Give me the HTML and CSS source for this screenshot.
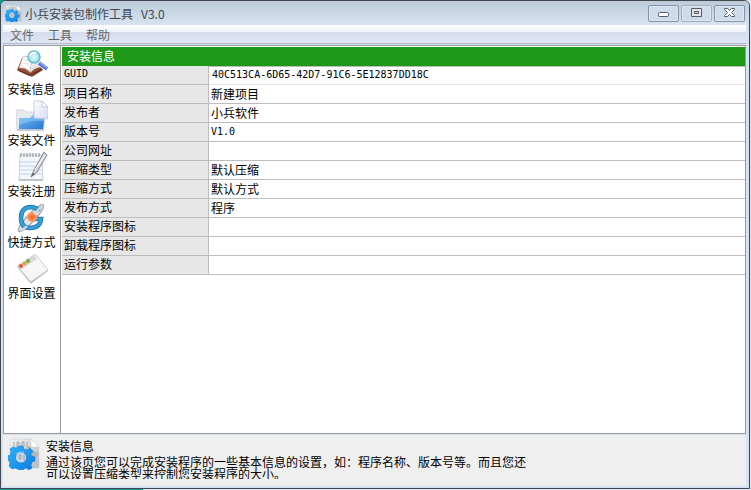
FILE: index.html
```html
<!DOCTYPE html>
<html lang="zh-CN">
<head>
<meta charset="UTF-8">
<meta name="viewport" content="width=device-width, initial-scale=1">
<title>小兵安装包制作工具 V3.0</title>
<link rel="stylesheet" href="styles.css">
</head>
<body>
<svg width="0" height="0" class="defs" aria-hidden="true">
  <defs>
    <linearGradient id="gearBlue" x1="0" y1="0" x2="1" y2="1">
      <stop offset="0" stop-color="#2fb4fa"/><stop offset="1" stop-color="#0a7be2"/>
    </linearGradient>
    <linearGradient id="pageGray" x1="0" y1="0" x2="1" y2="1">
      <stop offset="0" stop-color="#f2f2f2"/><stop offset="1" stop-color="#b9bcbf"/>
    </linearGradient>
    <linearGradient id="folderBlue" x1="0" y1="0" x2="1" y2="1">
      <stop offset="0" stop-color="#75bdf5"/><stop offset="1" stop-color="#2476d2"/>
    </linearGradient>
    <linearGradient id="paper" x1="0" y1="0" x2="1" y2="1">
      <stop offset="0" stop-color="#fff"/><stop offset="1" stop-color="#d5dbf4"/>
    </linearGradient>
    <radialGradient id="lens">
      <stop offset="0" stop-color="#e8fcff"/><stop offset="1" stop-color="#8fdce8"/>
    </radialGradient>
    <radialGradient id="orange">
      <stop offset="0" stop-color="#ff5a14"/><stop offset="1" stop-color="#f9a46c"/>
    </radialGradient>
    <symbol id="appIcon" viewBox="0 0 32 32">
      <path d="M2 1h21l8 8v21H2z" fill="url(#pageGray)" stroke="#c6c8ca" stroke-width=".5"/>
      <path d="M23 1v8h8z" fill="#fff" stroke="#c9cccf" stroke-width=".6"/>
      <path d="M6 4v5M9 4h2v5H9zM14 4h2v5h-2zM19 4v5M19 9h3v5h-3zM25 14h2v5h-2zM29 14v5" fill="none" stroke="#a0a3a6"/>
      <g fill="url(#gearBlue)" stroke="#0d78cc" stroke-width=".5">
        <path d="M11 8h4l1 3 3 1 3-2 3 3-2 3 1 2 3 1v4l-3 1-1 3 1 3-3 2-3-2-2 1-1 2h-4l-1-2-3-1-3 1-3-3 1-3-1-2-2-2v-3l3-1 1-3-1-3 3-2 3 1 2-1z"/>
      </g>
      <circle cx="13" cy="19.500" r="5.500" fill="#c9d8e4" stroke="#1778bf" stroke-width=".7"/>
      <path d="M8 16q3-3 8-2" fill="none" stroke="#8bd8ff"/>
      <path d="M11 17h2v4h-2zM16 17v5" fill="none" stroke="#8d99a3" stroke-width=".8"/>
    </symbol>
  </defs>
</svg>

<div class="window">
  <header class="titlebar">
    <svg class="title-icon"><use href="#appIcon"/></svg>
    <h1>小兵安装包制作工具</h1>
    <span class="version">V3.0</span>
    <div class="window-buttons">
      <button type="button" aria-label="最小化">
        <svg width="13" height="12"><rect x="1.500" y="5.500" width="10" height="4" rx="1" fill="#fff" stroke="#555b6b"/></svg>
      </button>
      <button type="button" class="disabled" aria-label="最大化">
        <svg width="13" height="12"><path d="M1.500 1.500h10v8h-10z" fill="#e4e4e4" stroke="#555b6b"/><path d="M4.500 4.500h4v2h-4z" fill="#cfd8e5" stroke="#555b6b"/></svg>
      </button>
      <button type="button" aria-label="关闭">
        <svg width="13" height="12"><path d="M1.500 1.500h3l2 2 2-2h3v1l-3 3 3 3v1h-3l-2-2-2 2h-3v-1l3-3-3-3z" fill="#fff" stroke="#555b6b"/></svg>
      </button>
    </div>
  </header>

  <nav class="menubar">
    <button type="button">文件</button>
    <button type="button">工具</button>
    <button type="button">帮助</button>
  </nav>

  <main class="content">
    <nav class="sidebar">
      <button type="button">
        <svg viewBox="0 0 32 32">
          <path d="M1 21L6 9l12 2 9 10-11 7z" fill="#935032"/>
          <path d="M2 21l11 5 4-1 9-5" fill="none" stroke="#6c321f" stroke-width="1.500"/>
          <path d="M3 19L7 8q5-2 9 1l-2 14q-5-5-11-4z" fill="#fafafa" stroke="#b8aaa2" stroke-width=".6"/>
          <path d="M16 9q5-3 7 0l3 9q-7 0-12 6z" fill="#eae8e9"/>
          <path d="M8 11l4 1M7 14l5 1M16 20l6-3" stroke="#d9d3d1" stroke-width=".7"/>
          <path d="M23 14l8 6" stroke="#5b79d8" stroke-width="4"/>
          <path d="M23 13l8 6" stroke="#a9bbf5"/>
          <circle cx="18" cy="8" r="6" fill="url(#lens)" stroke="#68bccb" stroke-width="1.500"/>
          <path d="M14 7q1-4 6-3" fill="none" stroke="#fff" stroke-width="2"/>
        </svg>
        <span>安装信息</span>
      </button>
      <button type="button">
        <svg viewBox="0 0 32 32">
          <path d="M0 10h8l2 2h18v18H1z" fill="#e7e9ee" stroke="#c5cad4" stroke-width=".7"/>
          <path d="M3 18h11l3-3h12l-2 14H3z" fill="url(#folderBlue)"/>
          <path d="M3 18h11l3-3h12l-1 6q-13-1-25 4z" fill="#8bc8f6" opacity=".6"/>
          <path d="M18 1h8l6 6v12l-14-1z" fill="url(#paper)" stroke="#bac4e6" stroke-width=".8"/>
          <path d="M26 1v6h6z" fill="#fff" stroke="#aebae0" stroke-width=".8"/>
          <path d="M1 30h27" stroke="#a4aab5"/>
        </svg>
        <span>安装文件</span>
      </button>
      <button type="button">
        <svg viewBox="0 0 32 32">
          <path d="M4 4h22l1 25H3z" fill="#f4f7fd" stroke="#bec5d2" stroke-width=".8"/>
          <path d="M4 11h22M4 15h22M4 19h22M4 23h22" stroke="#c3d0f0"/>
          <path d="M3 29h24" stroke="#9aa3b3"/>
          <path d="M5 2v4M8 2v4M11 2v4M14 2v4M17 2v4M20 2v4M23 2v4" stroke="#85898f"/>
          <path d="M28 1L18 19l-3 7 6-5L31 4z" fill="#cfd2d8" stroke="#858b94"/>
          <path d="M29 4L19 19" stroke="#fff"/>
          <path d="M15 26l2-4 2 1z" fill="#555"/>
        </svg>
        <span>安装注册</span>
      </button>
      <button type="button">
        <svg viewBox="0 0 32 32">
          <ellipse cx="15" cy="16" rx="18" ry="4" transform="rotate(-47 15 16)" fill="#e1e4e7" stroke="#a8adb4" stroke-width="1.500"/>
          <path d="M23 9q-3-4-9-4-9 1-9 11t9 10q10 0 11-9h-8" fill="none" stroke="#1b6fae" stroke-width="4.500"/>
          <path d="M23 9q-3-4-9-4-9 1-9 11t9 10q10 0 11-9h-8" fill="none" stroke="#379fd8" stroke-width="3"/>
          <circle cx="16" cy="15" r="5" fill="url(#orange)"/>
          <path d="M18 12L27 3M4 28q3 0 7-4" fill="none" stroke="#d4d9df" stroke-width="2"/>
        </svg>
        <span>快捷方式</span>
      </button>
      <button type="button">
        <svg viewBox="0 0 32 32">
          <path d="M1 14L18 3q1-1 2 0l12 15-16 12q-1 1-2 0z" fill="#bfc1c4"/>
          <path d="M1 13L18 2q1-1 2 0l12 15-16 11q-1 1-2 0z" fill="#f6f6f6" stroke="#b8babd" stroke-width=".7"/>
          <path d="M1 13L18 2l3 4L4 17z" fill="#d7dad9"/>
          <circle cx="5" cy="13" r="2" fill="#e9573e"/>
          <circle cx="8.500" cy="10.500" r="2" fill="#eca329"/>
          <circle cx="12" cy="8" r="2" fill="#6bac43"/>
        </svg>
        <span>界面设置</span>
      </button>
    </nav>

    <section class="panel">
      <h2>安装信息</h2>
      <table class="props">
        <tr class="active"><th><label for="guid">GUID</label></th><td><input id="guid" value="40C513CA-6D65-42D7-91C6-5E12837DD18C"></td></tr>
        <tr><th><label for="project">项目名称</label></th><td><input id="project" value="新建项目"></td></tr>
        <tr><th><label for="publisher">发布者</label></th><td><input id="publisher" value="小兵软件"></td></tr>
        <tr><th><label for="ver">版本号</label></th><td><input id="ver" value="V1.0"></td></tr>
        <tr><th><label for="site">公司网址</label></th><td><input id="site"></td></tr>
        <tr><th><label for="ziptype">压缩类型</label></th><td><input id="ziptype" value="默认压缩"></td></tr>
        <tr><th><label for="zipmode">压缩方式</label></th><td><input id="zipmode" value="默认方式"></td></tr>
        <tr><th><label for="pubmode">发布方式</label></th><td><input id="pubmode" value="程序"></td></tr>
        <tr><th><label for="inicon">安装程序图标</label></th><td><input id="inicon"></td></tr>
        <tr><th><label for="unicon">卸载程序图标</label></th><td><input id="unicon"></td></tr>
        <tr><th><label for="args">运行参数</label></th><td><input id="args"></td></tr>
      </table>
    </section>
  </main>

  <footer class="help">
    <svg class="help-icon"><use href="#appIcon"/></svg>
    <div class="help-text">
      <h3>安装信息</h3>
      <p>通过该页您可以完成安装程序的一些基本信息的设置，如：程序名称、版本号等。而且您还可以设置压缩类型来控制您安装程序的大小。</p>
    </div>
  </footer>
</div>
</body>
</html>
```
FILE: styles.css
```css
* {
  box-sizing: border-box;
}
body {
  margin: 0;
  height: 100vh;
  padding: 0 1px 1px 0;
  background: linear-gradient(90deg, #159a94 19%, #dfe6f2 19%);
  font-family: "Noto Sans CJK SC", sans-serif;
  font-size: 12px;
  color: #000;
  overflow: hidden;
}
h1, h2, h3, p {
  margin: 0;
  font-size: 12px;
  font-weight: normal;
}
button {
  padding: 0;
  border: none;
  background: none;
  font: inherit;
  color: inherit;
}
.defs {
  position: absolute;
}
.window {
  display: flex;
  flex-direction: column;
  height: 100%;
  padding: 0 3px 2px 2px;
  border: 1px solid #43464d;
  border-radius: 6px 6px 0 0;
  background: #d5e2f2;
  overflow: hidden;
}

/* title bar */
.titlebar {
  display: flex;
  align-items: center;
  height: 24px;
  padding: 0 4px 0 2px;
  margin: 0 -3px 0 -2px;
  background: linear-gradient(#bccad9, #d8e4f0);
  color: #3e4650;
}
.title-icon {
  width: 17px;
  height: 17px;
  margin: 0 3px 0 2px;
}
.version {
  flex: 1;
  margin-left: 8px;
}
.window-buttons {
  display: flex;
  gap: 2px;
}
.window-buttons button {
  display: flex;
  align-items: center;
  justify-content: center;
  width: 31px;
  height: 17px;
  border: 1px solid #8491ad;
  border-radius: 2px;
  background: #cedbe8;
  box-shadow: inset 0 0 0 1px #dce7f1;
}
.window-buttons .disabled {
  border-color: #a3adb9;
}

/* menu */
.menubar {
  display: flex;
  gap: 14px;
  height: 19px;
  padding: 0 7px;
  border-bottom: 1px solid #b5b9c6;
  background: linear-gradient(#fff 0, #eef2fa 7px, #d6dcef 7px, #e1e6f6);
  color: #666;
}

/* main area */
.content {
  display: flex;
  flex: 1;
  min-height: 0;
  margin-top: 1px;
  border: 1px solid #9b9b9b;
  background: #fff;
}
.sidebar {
  display: flex;
  flex-direction: column;
  gap: 4px;
  width: 57px;
  padding-top: 3px;
  border-right: 1px solid #9b9b9b;
}
.sidebar button {
  display: flex;
  flex-direction: column;
  align-items: center;
  padding-right: 1px;
  line-height: 15px;
}
.sidebar svg {
  width: 32px;
  height: 32px;
}
.panel {
  flex: 1;
  padding: 1px 0 0 1px;
}
.panel h2 {
  height: 19px;
  padding-left: 5px;
  line-height: 18px;
  background: #1d9917;
  color: #fff;
}
.props {
  width: 100%;
  table-layout: fixed;
  border-spacing: 0;
}
.props th, .props td {
  height: 19px;
  padding: 0;
  border-bottom: 1px solid #bdbdbd;
}
.props th {
  width: 147px;
  padding-left: 2px;
  border-right: 1px solid #bdbdbd;
  background: #e7e7e7;
  font-weight: normal;
  text-align: left;
  line-height: 16px;
}
.props label {
  display: block;
  height: 18px;
}
.props input {
  display: block;
  width: 100%;
  height: 18px;
  padding: 0 2px 2px;
  border: none;
  outline: none;
  background: #fff;
  font: inherit;
}
#guid, #ver, label[for="guid"] {
  font-family: "DejaVu Sans Mono", monospace;
  font-size: 10px;
}
.props .active td {
  border-top: 1px solid #bdbdbd;
  border-bottom-color: #e3e5ee;
}
.props .active input {
  height: 17px;
  padding-left: 3px;
}

/* help */
.help {
  display: flex;
  gap: 6px;
  height: 51px;
  margin-top: 1px;
  padding: 3px 5px;
  background: #efefef;
}
.help-icon {
  flex: none;
  width: 32px;
  height: 32px;
}
.help-text {
  width: 480px;
}
.help-text h3 {
  margin-bottom: 2px;
  line-height: 16px;
}
.help-text p {
  height: 23px;
  line-height: 12px;
  overflow: hidden;
}
```
